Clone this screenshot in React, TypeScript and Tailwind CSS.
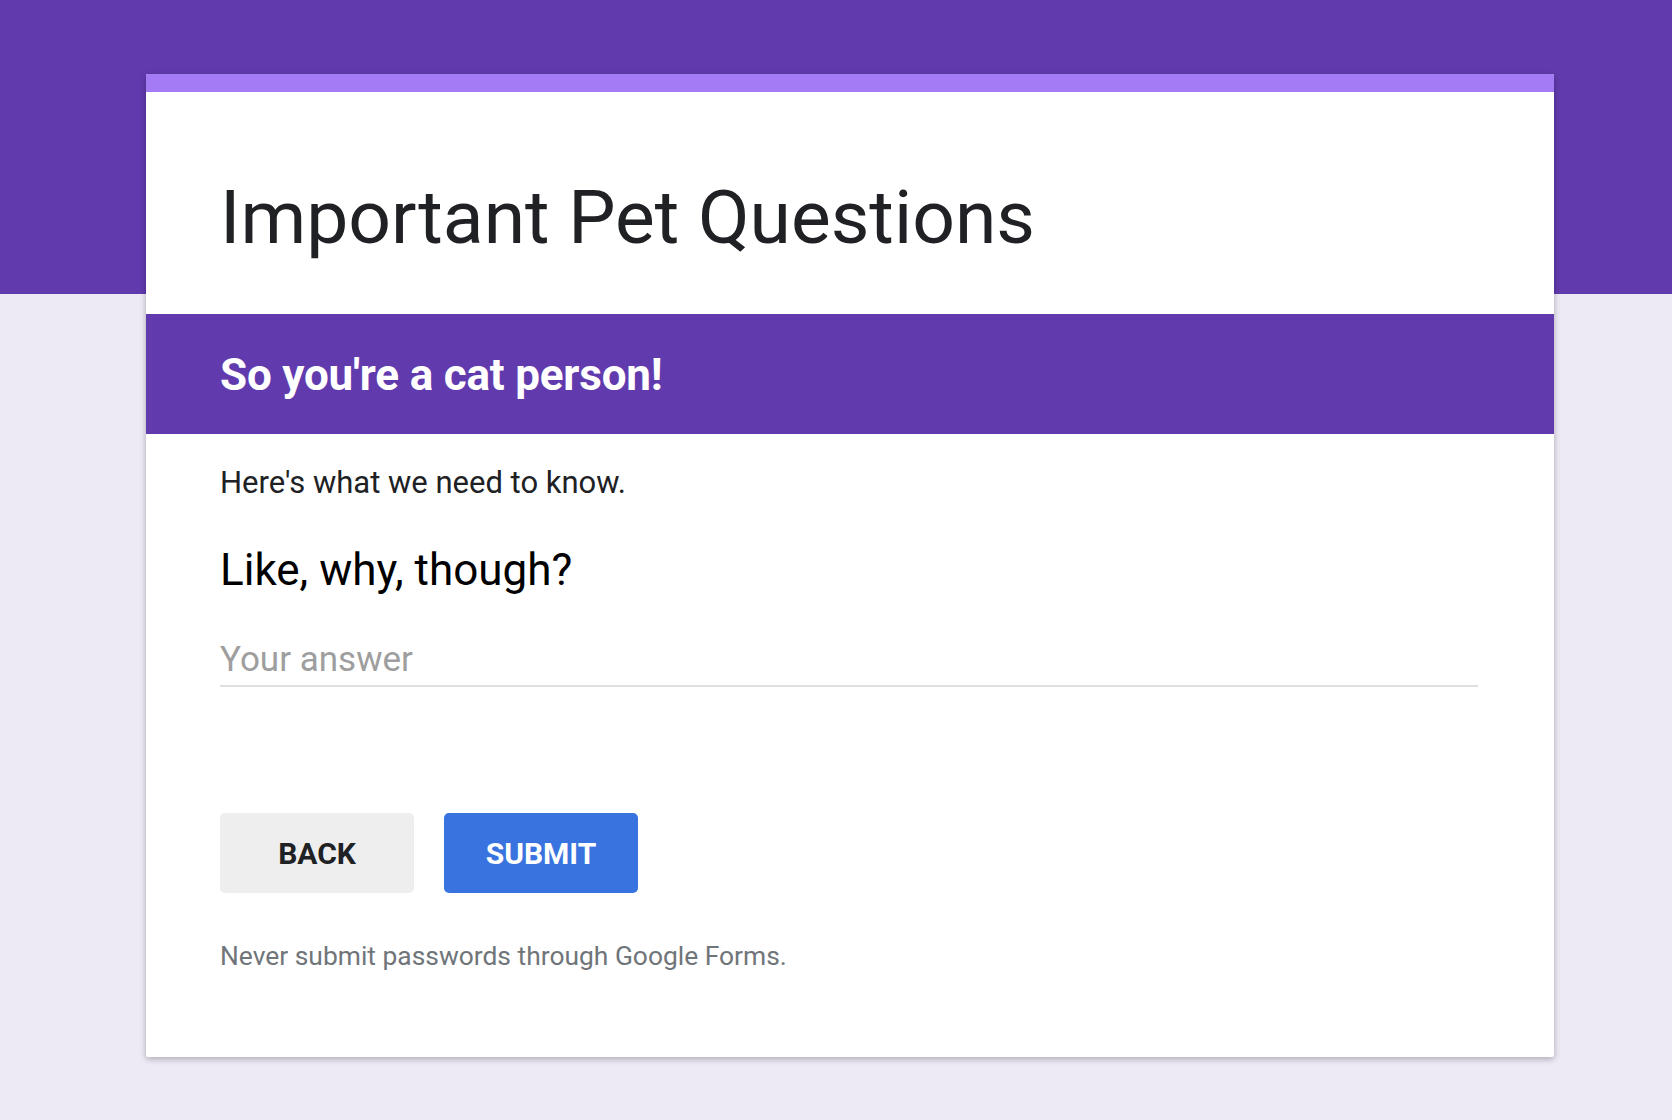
export default function App() {
  return (
    <div
      className="relative min-h-[1120px] w-full bg-[#ede9f5]"
      style={{ fontFamily: "Roboto, 'Liberation Sans', sans-serif" }}
    >
      <div className="absolute inset-x-0 top-0 h-[294px] bg-[#613bae]" />
      <div className="relative pt-[74px]">
        <div className="ml-[146px] w-[1408px] overflow-hidden rounded-[2px] bg-white shadow-[0_2px_6px_rgba(0,0,0,0.28)]">
          <div className="h-[18px] bg-[#a57bf5]" />
          <div className="h-[222px] px-[74px] pt-[88px]">
            <h1 className="text-[75px] leading-[75px] text-[#202124]">Important Pet Questions</h1>
          </div>
          <div className="h-[120px] bg-[#613bae] px-[74px] pt-[39px]">
            <h2 className="text-[44px] font-bold leading-[44px] tracking-[-0.2px] text-white">So you're a cat person!</h2>
          </div>
          <div className="pl-[74px] pr-[76px] pb-[88px]">
            <p className="pt-[33px] text-[31px] leading-[31px] text-[#202124]">Here's what we need to know.</p>
            <p className="mt-[50px] text-[44px] leading-[44px] text-black">Like, why, though?</p>
            <div className="mt-[50px] border-b-2 border-[#e0e0e0] pb-[8px] text-[35px] leading-[35px] text-[#9e9e9e]">
              Your answer
            </div>
            <div className="mt-[126px] flex gap-[30px]">
              <button className="flex h-[80px] w-[194px] items-center justify-center rounded-[5px] bg-[#eeeeee] text-[30px] font-bold text-[#202124]">
                BACK
              </button>
              <button className="flex h-[80px] w-[194px] items-center justify-center rounded-[5px] bg-[#3873e0] text-[30px] font-bold text-white">
                SUBMIT
              </button>
            </div>
            <p className="mt-[50px] text-[26.4px] leading-[26px] text-[#70757a]">
              Never submit passwords through Google Forms.
            </p>
          </div>
        </div>
      </div>
    </div>
  )
}
